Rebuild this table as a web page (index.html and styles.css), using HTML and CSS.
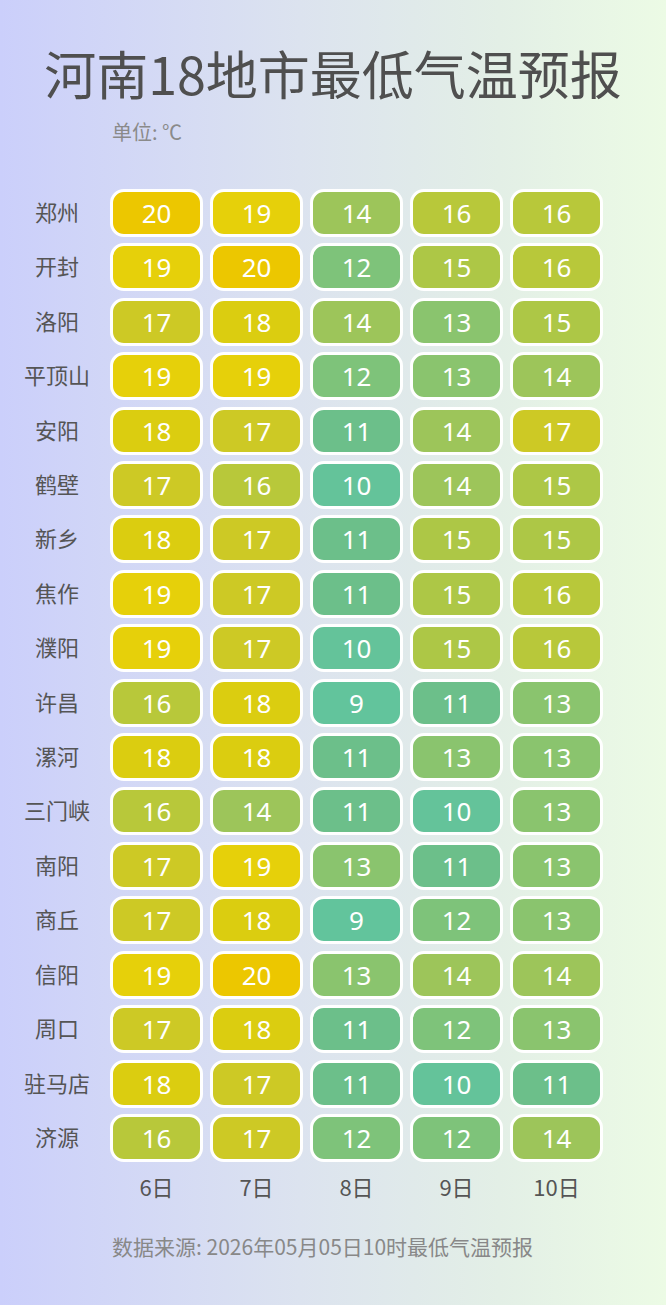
FILE: index.html
```html
<!DOCTYPE html>
<html lang="zh-CN">
<head>
<meta charset="utf-8">
<title>河南18地市最低气温预报</title>
<link rel="stylesheet" href="styles.css">
</head>
<body>
<div class="page">
  <h1 class="title">河南18地市最低气温预报</h1>
  <div class="unit">单位: ℃</div>
  <div class="grid">
    <div class="city">郑州</div><div class="cell t20">20</div><div class="cell t19">19</div><div class="cell t14">14</div><div class="cell t16">16</div><div class="cell t16">16</div>
    <div class="city">开封</div><div class="cell t19">19</div><div class="cell t20">20</div><div class="cell t12">12</div><div class="cell t15">15</div><div class="cell t16">16</div>
    <div class="city">洛阳</div><div class="cell t17">17</div><div class="cell t18">18</div><div class="cell t14">14</div><div class="cell t13">13</div><div class="cell t15">15</div>
    <div class="city">平顶山</div><div class="cell t19">19</div><div class="cell t19">19</div><div class="cell t12">12</div><div class="cell t13">13</div><div class="cell t14">14</div>
    <div class="city">安阳</div><div class="cell t18">18</div><div class="cell t17">17</div><div class="cell t11">11</div><div class="cell t14">14</div><div class="cell t17">17</div>
    <div class="city">鹤壁</div><div class="cell t17">17</div><div class="cell t16">16</div><div class="cell t10">10</div><div class="cell t14">14</div><div class="cell t15">15</div>
    <div class="city">新乡</div><div class="cell t18">18</div><div class="cell t17">17</div><div class="cell t11">11</div><div class="cell t15">15</div><div class="cell t15">15</div>
    <div class="city">焦作</div><div class="cell t19">19</div><div class="cell t17">17</div><div class="cell t11">11</div><div class="cell t15">15</div><div class="cell t16">16</div>
    <div class="city">濮阳</div><div class="cell t19">19</div><div class="cell t17">17</div><div class="cell t10">10</div><div class="cell t15">15</div><div class="cell t16">16</div>
    <div class="city">许昌</div><div class="cell t16">16</div><div class="cell t18">18</div><div class="cell t9">9</div><div class="cell t11">11</div><div class="cell t13">13</div>
    <div class="city">漯河</div><div class="cell t18">18</div><div class="cell t18">18</div><div class="cell t11">11</div><div class="cell t13">13</div><div class="cell t13">13</div>
    <div class="city">三门峡</div><div class="cell t16">16</div><div class="cell t14">14</div><div class="cell t11">11</div><div class="cell t10">10</div><div class="cell t13">13</div>
    <div class="city">南阳</div><div class="cell t17">17</div><div class="cell t19">19</div><div class="cell t13">13</div><div class="cell t11">11</div><div class="cell t13">13</div>
    <div class="city">商丘</div><div class="cell t17">17</div><div class="cell t18">18</div><div class="cell t9">9</div><div class="cell t12">12</div><div class="cell t13">13</div>
    <div class="city">信阳</div><div class="cell t19">19</div><div class="cell t20">20</div><div class="cell t13">13</div><div class="cell t14">14</div><div class="cell t14">14</div>
    <div class="city">周口</div><div class="cell t17">17</div><div class="cell t18">18</div><div class="cell t11">11</div><div class="cell t12">12</div><div class="cell t13">13</div>
    <div class="city">驻马店</div><div class="cell t18">18</div><div class="cell t17">17</div><div class="cell t11">11</div><div class="cell t10">10</div><div class="cell t11">11</div>
    <div class="city">济源</div><div class="cell t16">16</div><div class="cell t17">17</div><div class="cell t12">12</div><div class="cell t12">12</div><div class="cell t14">14</div>
  </div>
  <div class="axis">
    <div class="axis-spacer"></div><div class="day">6日</div><div class="day">7日</div><div class="day">8日</div><div class="day">9日</div><div class="day">10日</div>
  </div>
  <div class="source">数据来源: 2026年05月05日10时最低气温预报</div>
</div>
</body>
</html>
```
FILE: styles.css
```css
html, body {
  margin: 0;
  padding: 0;
}
body {
  width: 666px;
  height: 1305px;
  overflow: hidden;
  background: linear-gradient(to right, #cbcffb 0%, #dce3ef 45%, #e3efe6 75%, #ecfbe5 100%);
  font-family: "Noto Sans CJK SC", "Noto Sans", sans-serif;
}
.page {
  width: 666px;
  height: 1305px;
  box-sizing: border-box;
  padding-top: 41px;
}
.title {
  margin: 0;
  font-size: 52px;
  line-height: 64px;
  font-weight: 400;
  color: #4f4f4f;
  text-align: center;
}
.unit {
  margin-top: 15px;
  padding-left: 112px;
  font-size: 20px;
  line-height: 24px;
  color: #8a8a8a;
}
.grid {
  margin-top: 45px;
  margin-left: 11px;
  display: grid;
  grid-template-columns: 92px repeat(5, 93px);
  grid-auto-rows: 48px;
  column-gap: 7px;
  row-gap: 6.41px;
}
.city {
  display: flex;
  align-items: center;
  justify-content: center;
  font-size: 22px;
  color: #555;
  white-space: nowrap;
  padding-bottom: 4px;
}
.cell {
  box-sizing: border-box;
  border: 3px solid #fff;
  border-radius: 14px;
  display: flex;
  align-items: center;
  justify-content: center;
  color: #fff;
  font-family: "Noto Sans", sans-serif;
  font-size: 26px;
}
.t9 { background: #62c49c; }
.t10 { background: #64c39a; }
.t11 { background: #6cbf8a; }
.t12 { background: #7ec37a; }
.t13 { background: #8ac46e; }
.t14 { background: #9dc55a; }
.t15 { background: #adc746; }
.t16 { background: #b8c83a; }
.t17 { background: #cdc925; }
.t18 { background: #dbcd10; }
.t19 { background: #e6d00a; }
.t20 { background: #ecc700; }
.axis {
  margin-top: 12px;
  margin-left: 11px;
  display: grid;
  grid-template-columns: 92px repeat(5, 93px);
  column-gap: 7px;
}
.day {
  text-align: center;
  font-size: 22px;
  line-height: 24px;
  color: #555;
}
.source {
  margin-top: 36px;
  padding-left: 112px;
  font-size: 21px;
  line-height: 24px;
  color: #888;
}
```
